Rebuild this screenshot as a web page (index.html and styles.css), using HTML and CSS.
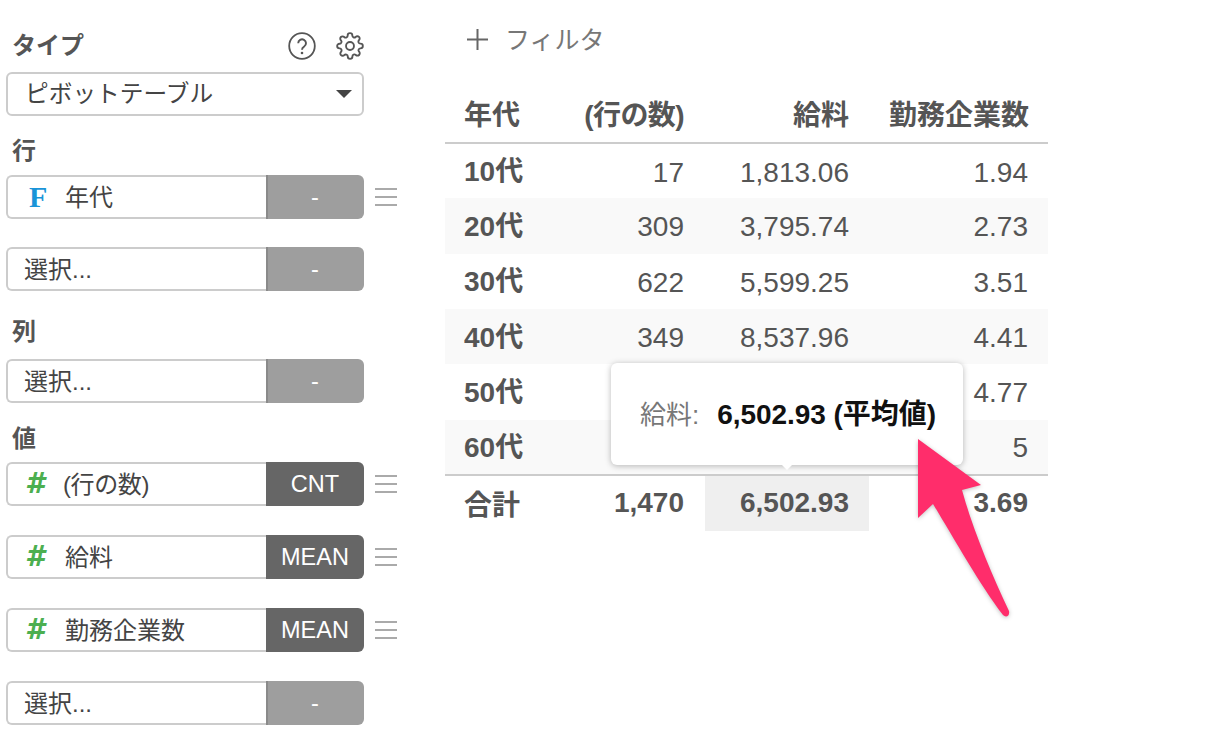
FILE: index.html
```html
<!DOCTYPE html>
<html lang="ja">
<head>
<meta charset="utf-8">
<title>ピボットテーブル</title>
<link rel="stylesheet" href="styles.css">
</head>
<body>
<div class="page">
  <aside class="side">
    <div class="head">
      <span class="label">タイプ</span>
      <div class="tools">
        <svg class="ico" viewBox="0 0 28 28" width="28" height="28"><circle cx="14" cy="14" r="12.8" fill="none" stroke="#555" stroke-width="1.8"/><path d="M10.2 11.2a3.9 3.9 0 1 1 6 3.3c-1.4.9-2.2 1.5-2.2 3.2" fill="none" stroke="#555" stroke-width="1.9"/><circle cx="14" cy="21" r="1.3" fill="#555"/></svg>
        <svg class="ico" viewBox="0 0 24 24" width="28" height="28" fill="none" stroke="#555" stroke-width="1.6" stroke-linejoin="round"><circle cx="12" cy="12" r="3.4"/><path d="M19.4 15a1.65 1.65 0 0 0 .33 1.82l.06.06a2 2 0 0 1 0 2.83 2 2 0 0 1-2.83 0l-.06-.06a1.65 1.65 0 0 0-1.82-.33 1.65 1.65 0 0 0-1 1.51V21a2 2 0 0 1-2 2 2 2 0 0 1-2-2v-.09A1.65 1.65 0 0 0 9 19.4a1.65 1.65 0 0 0-1.82.33l-.06.06a2 2 0 0 1-2.83 0 2 2 0 0 1 0-2.83l.06-.06a1.65 1.65 0 0 0 .33-1.82 1.65 1.65 0 0 0-1.51-1H3a2 2 0 0 1-2-2 2 2 0 0 1 2-2h.09A1.65 1.65 0 0 0 4.6 9a1.65 1.65 0 0 0-.33-1.82l-.06-.06a2 2 0 0 1 0-2.83 2 2 0 0 1 2.83 0l.06.06a1.65 1.65 0 0 0 1.82.33H9a1.65 1.65 0 0 0 1-1.51V3a2 2 0 0 1 2-2 2 2 0 0 1 2 2v.09a1.65 1.65 0 0 0 1 1.51 1.65 1.65 0 0 0 1.82-.33l.06-.06a2 2 0 0 1 2.83 0 2 2 0 0 1 0 2.83l-.06.06a1.65 1.65 0 0 0-.33 1.82V9a1.65 1.65 0 0 0 1.51 1H21a2 2 0 0 1 2 2 2 2 0 0 1-2 2h-.09a1.65 1.65 0 0 0-1.51 1z"/></svg>
      </div>
    </div>
    <div class="select"><span class="txt">ピボットテーブル</span><i class="caret"></i></div>

    <div class="label sec sec-row">行</div>
    <div class="row"><div class="field"><span class="type f">F</span><span class="txt">年代</span></div><div class="agg">-</div><div class="grip"><i></i><i></i><i></i></div></div>
    <div class="row next-a"><div class="field empty"><span class="txt">選択...</span></div><div class="agg">-</div></div>

    <div class="label sec sec-col">列</div>
    <div class="row first-col"><div class="field empty"><span class="txt">選択...</span></div><div class="agg">-</div></div>

    <div class="label sec sec-val">値</div>
    <div class="row first-val"><div class="field"><span class="type h">#</span><span class="txt paren">(行の数)</span></div><div class="agg on">CNT</div><div class="grip"><i></i><i></i><i></i></div></div>
    <div class="row next"><div class="field"><span class="type h">#</span><span class="txt">給料</span></div><div class="agg on">MEAN</div><div class="grip"><i></i><i></i><i></i></div></div>
    <div class="row next"><div class="field"><span class="type h">#</span><span class="txt">勤務企業数</span></div><div class="agg on">MEAN</div><div class="grip"><i></i><i></i><i></i></div></div>
    <div class="row next"><div class="field empty"><span class="txt">選択...</span></div><div class="agg">-</div></div>
  </aside>

  <main class="main">
    <div class="filter">
      <svg viewBox="0 0 21 21" width="21" height="21"><path d="M10.5 0v21M0 10.5h21" stroke="#666" stroke-width="2"/></svg>
      <span class="filter-txt">フィルタ</span>
    </div>
    <table class="pivot">
      <thead>
        <tr><th class="c1">年代</th><th class="c2">(行の数)</th><th class="c3">給料</th><th class="c4">勤務企業数</th></tr>
      </thead>
      <tbody>
        <tr><th>10代</th><td>17</td><td>1,813.06</td><td>1.94</td></tr>
        <tr><th>20代</th><td>309</td><td>3,795.74</td><td>2.73</td></tr>
        <tr><th>30代</th><td>622</td><td>5,599.25</td><td>3.51</td></tr>
        <tr><th>40代</th><td>349</td><td>8,537.96</td><td>4.41</td></tr>
        <tr><th>50代</th><td></td><td></td><td>4.77</td></tr>
        <tr><th>60代</th><td></td><td></td><td>5</td></tr>
      </tbody>
      <tfoot>
        <tr><th>合計</th><td>1,470</td><td class="hot">6,502.93</td><td>3.69</td></tr>
      </tfoot>
    </table>
  </main>
</div>
<div class="tip"><span class="tip-k">給料:</span><b>6,502.93 (平均値)</b></div>
<svg class="arrow" viewBox="0 0 1222 748" width="1222" height="748"><path d="M918 439L981 485L962 490C973 530 992 575 1009 611C1010 616 1006 618 1003 615C980 585 955 540 933 504L918 518Z" fill="#ff2d6b"/></svg>
</body>
</html>
```
FILE: styles.css
```css
* { box-sizing: border-box; }
html, body { margin: 0; padding: 0; background: #fff; }
body {
  width: 1222px;
  height: 748px;
  overflow: hidden;
  position: relative;
  font-family: "Liberation Sans", "Noto Sans CJK JP", sans-serif;
  color: #555;
}
.page { display: flex; align-items: flex-start; }

.side { width: 445px; flex: none; padding: 28px 0 0 6px; }
.head { display: flex; justify-content: space-between; align-items: center; width: 358px; height: 36px; padding-left: 6px; }
.tools { display: flex; gap: 20px; align-items: center; }
.ico { display: block; }
.label { font-size: 24px; font-weight: 700; color: #555; line-height: 34px; }
.sec { padding-left: 6px; height: 34px; }
.sec-row { margin-top: 18px; }
.sec-col { margin-top: 24px; }
.sec-val { margin-top: 19px; }

.select {
  margin-top: 8px;
  width: 358px;
  height: 44px;
  border: 2px solid #ccc;
  border-radius: 6px;
  display: flex;
  align-items: center;
  justify-content: space-between;
  padding: 0 10px 0 17px;
  font-size: 23.7px;
  color: #444;
}
.txt { position: relative; top: -2px; }
.paren { left: -2px; letter-spacing: -.4px; }
.caret { width: 0; height: 0; border-left: 8px solid transparent; border-right: 8px solid transparent; border-top: 8px solid #444; }

.row { display: flex; align-items: stretch; height: 44px; margin-top: 7px; }
.next-a { margin-top: 28px; }
.next { margin-top: 29px; }
.first-col { margin-top: 10px; }
.first-val { margin-top: 6px; }
.field {
  width: 260px;
  border: 2px solid #ccc;
  border-right: 0;
  border-radius: 6px 0 0 6px;
  display: flex;
  align-items: center;
  padding-left: 18px;
  font-size: 24px;
  color: #444;
  white-space: nowrap;
}
.field.empty { padding-left: 16px; }
.type { width: 39px; flex: none; line-height: 1; }
.type.f { font-family: "Liberation Serif", serif; font-weight: 700; font-size: 30px; color: #1a94d8; padding-left: 3px; }
.type.h { font-family: "DejaVu Sans", sans-serif; font-weight: 700; font-style: italic; font-size: 28px; color: #4caf50; margin-left: -1px; margin-right: 1px; }
.agg {
  width: 98px;
  background: #9e9e9e;
  border-left: 2px solid #8a8a8a;
  border-radius: 0 6px 6px 0;
  color: #fff;
  font-size: 23.5px;
  display: flex;
  align-items: center;
  justify-content: center;
  padding-right: 2px;
}
.agg.on { background: #666; border-left-color: #666; }
.grip { width: 22px; margin-left: 11px; display: flex; flex-direction: column; gap: 6px; justify-content: center; padding-bottom: 1px; }
.grip i { display: block; height: 2px; background: #aaa; }

.main { width: 603px; flex: none; padding-top: 27px; }
.filter { display: flex; align-items: center; gap: 17px; height: 24px; padding-left: 22px; font-size: 25px; color: #777; }
.filter svg { display: block; }
.filter-txt { position: relative; top: -1px; }

.pivot { margin-top: 36px; width: 603px; table-layout: fixed; border-collapse: collapse; font-size: 28px; color: #555; }
.pivot th, .pivot td { padding: 0 20px; text-align: right; white-space: nowrap; overflow: hidden; }
.pivot .c1 { width: 120px; }
.pivot .c2 { width: 140px; }
.pivot .c3 { width: 164px; }
.pivot .c4 { width: 179px; }
.pivot thead th { height: 56px; font-size: 28px; font-weight: 700; border-bottom: 2px solid #ccc; padding-bottom: 3px; }
.pivot thead .c2 { padding-right: 21px; padding-left: 0; letter-spacing: -.6px; }
.pivot thead .c1, .pivot tbody th, .pivot tfoot th { text-align: left; padding-left: 19px; }
.pivot td:nth-child(2) { padding-right: 21px; }
.pivot tbody td { padding-top: 3px; }
.pivot tbody th { font-weight: 700; padding-bottom: 4px; }
.pivot tbody tr { height: 55.33px; }
.pivot tbody tr:nth-child(even) { background: #f9f9f9; }
.pivot tfoot tr { height: 56px; border-top: 2px solid #ccc; }
.pivot tfoot th, .pivot tfoot td { font-weight: 700; }
.pivot tfoot th { padding-bottom: 1px; }
.pivot .hot { background: #efefef; }

.tip {
  position: absolute;
  left: 611px;
  top: 363px;
  width: 352px;
  height: 102px;
  background: #fff;
  border-radius: 6px;
  box-shadow: 0 1px 6px rgba(0, 0, 0, .28);
  display: flex;
  align-items: center;
  padding: 0 0 4px 29px;
  font-size: 26px;
  color: #777;
  white-space: nowrap;
}
.tip::after {
  content: "";
  position: absolute;
  left: 170px;
  bottom: -5px;
  width: 0;
  height: 0;
  border-left: 6px solid transparent;
  border-right: 6px solid transparent;
  border-top: 6px solid #fff;
}
.tip-k { margin-right: 18px; }
.tip b { color: #111; font-size: 28px; letter-spacing: -.05px; }

.arrow { position: absolute; left: 0; top: 0; pointer-events: none; filter: drop-shadow(0 1px 2px rgba(0, 0, 0, .25)); }
```
